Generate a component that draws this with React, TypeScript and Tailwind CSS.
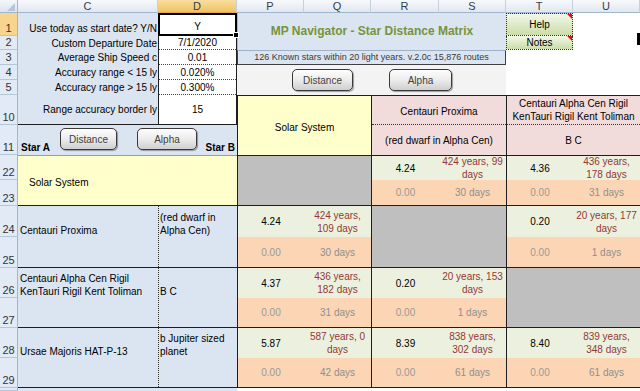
import React from 'react';

type Pair = { dist: string; time: string[]; time2: string } | null;

const STARS: { name: string[]; note: string[]; pairs: Pair[] }[] = [
  {
    name: ['Solar System'], note: [],
    pairs: [
      null,
      { dist: '4.24', time: ['424 years, 99', 'days'], time2: '30 days' },
      { dist: '4.36', time: ['436 years,', '178 days'], time2: '31 days' },
    ],
  },
  {
    name: ['Centauri Proxima'], note: ['(red dwarf in', 'Alpha Cen)'],
    pairs: [
      { dist: '4.24', time: ['424 years,', '109 days'], time2: '30 days' },
      null,
      { dist: '0.20', time: ['20 years, 177', 'days'], time2: '1 days' },
    ],
  },
  {
    name: ['Centauri Alpha Cen Rigil', 'KenTauri Rigil Kent Toliman'], note: ['B C'],
    pairs: [
      { dist: '4.37', time: ['436 years,', '182 days'], time2: '31 days' },
      { dist: '0.20', time: ['20 years, 153', 'days'], time2: '1 days' },
      null,
    ],
  },
  {
    name: ['Ursae Majoris HAT-P-13'], note: ['b Jupiter sized', 'planet'],
    pairs: [
      { dist: '5.87', time: ['587 years, 0', 'days'], time2: '42 days' },
      { dist: '8.39', time: ['838 years,', '302 days'], time2: '61 days' },
      { dist: '8.40', time: ['839 years,', '348 days'], time2: '61 days' },
    ],
  },
];

const TOP = ['row-start-9', 'row-start-11', 'row-start-13', 'row-start-15'];
const BOT = ['row-start-10', 'row-start-12', 'row-start-14', 'row-start-16'];
const SPAN = ['row-start-9 row-span-2', 'row-start-11 row-span-2', 'row-start-13 row-span-2', 'row-start-15 row-span-2'];
const UPPER_H = ['h-[25px]', 'h-[31px]', 'h-[30px]', 'h-[30px]'];
const COL_A = ['col-start-4', 'col-start-6', 'col-start-8'];
const COL_B = ['col-start-5', 'col-start-7', 'col-start-9'];

const ROW_HEADS = [
  { n: '1', cls: 'row-start-2 bg-[#f8d58d]' },
  { n: '2', cls: 'row-start-3' },
  { n: '3', cls: 'row-start-4' },
  { n: '4', cls: 'row-start-5' },
  { n: '5', cls: 'row-start-6' },
  { n: '10', cls: 'row-start-7' },
  { n: '11', cls: 'row-start-8' },
  { n: '22', cls: 'row-start-9' },
  { n: '23', cls: 'row-start-10' },
  { n: '24', cls: 'row-start-11' },
  { n: '25', cls: 'row-start-12' },
  { n: '26', cls: 'row-start-13' },
  { n: '27', cls: 'row-start-14' },
  { n: '28', cls: 'row-start-15' },
  { n: '29', cls: 'row-start-16' },
  { n: '', cls: 'row-start-17' },
];

const COL_HEADS = [
  { n: 'C', cls: 'col-start-2' },
  { n: 'D', cls: 'col-start-3 from-[#f9dea0] to-[#f1c260] border-b-[#e2a94a]' },
  { n: 'P', cls: 'col-start-4' },
  { n: 'Q', cls: 'col-start-5' },
  { n: 'R', cls: 'col-start-6' },
  { n: 'S', cls: 'col-start-7' },
  { n: 'T', cls: 'col-start-8' },
  { n: 'U', cls: 'col-start-9' },
];

const SETTINGS = [
  { label: 'Custom Departure Date', value: '7/1/2020', h: 'h-[14px]' },
  { label: 'Average Ship Speed c', value: '0.01', h: 'h-[15px]' },
  { label: 'Accuracy range < 15 ly', value: '0.020%', h: 'h-[15px]' },
  { label: 'Accuracy range > 15 ly', value: '0.300%', h: 'h-[15px]' },
];

function Btn({ label, w }: { label: string; w: string }) {
  return (
    <div className={`${w} h-[22px] shrink-0 rounded-[5px] border border-[#3a3a3a] bg-linear-to-b from-[#fdfdfd] via-[#ececec] to-[#cfcfcf] shadow-[1px_1px_1px_rgba(0,0,0,0.35)] flex items-center justify-center text-[10px] text-[#404040]`}>
      {label}
    </div>
  );
}

function Triangle() {
  return <div className="absolute top-0 right-0 w-0 h-0 border-l-[5px] border-l-transparent border-t-[5px] border-t-[#e01010]" />;
}

export default function App() {
  return (
    <div className="w-[640px] h-[391px] overflow-hidden bg-white font-['Liberation_Sans',Arial,sans-serif] text-[10px] leading-[13px] text-black">
      <div className="grid grid-cols-[18px_140px_79px_67px_67px_68px_67px_67px_67px] grid-rows-[13px_23px_14px_15px_15px_15px_30px_30px_25px_26px_31px_31px_30px_30px_30px_30px_3px]">

        {/* corner + column headers */}
        <div className="col-start-1 row-start-1 relative bg-linear-to-b from-[#f4f7fb] to-[#dde4ee] border-r border-b border-[#9eb6ce]">
          <svg className="absolute right-[2px] bottom-[1px]" width="8" height="8" viewBox="0 0 8 8">
            <polygon points="8,0 8,8 0,8" fill="#b6c5d8" />
          </svg>
        </div>
        {COL_HEADS.map(c => (
          <div key={c.n} className={`${c.cls} row-start-1 bg-linear-to-b from-[#f7f9fc] to-[#e1e7ef] border-r border-r-[#c6d1de] border-b border-b-[#9eb6ce] flex items-center justify-center text-[11px] leading-none text-[#333c4a]`}>
            {c.n}
          </div>
        ))}

        {/* row headers */}
        {ROW_HEADS.map((r, i) => (
          <div key={i} className={`${r.cls} col-start-1 bg-[#e2eaf5] border-b border-b-[#b4c6da] border-r border-r-[#9eb6ce] flex items-end justify-center pb-[1px] text-[11px] leading-none text-[#333]`}>
            {r.n}
          </div>
        ))}

        {/* settings labels */}
        <div className="col-start-2 row-start-2 bg-[#dbe5f1] flex items-end justify-end pr-[1px] pb-[1px]">Use today as start date? Y/N</div>
        {SETTINGS.map((s, i) => (
          <div key={s.label} className={`col-start-2 ${['row-start-3', 'row-start-4', 'row-start-5', 'row-start-6'][i]} bg-[#dbe5f1] flex items-center justify-end pr-[1px]`}>
            {s.label}
          </div>
        ))}
        <div className="col-start-2 row-start-7 bg-[#dbe5f1] border-b border-[#1e1e1e] flex items-center justify-end pr-[1px]">Range accuracy border ly</div>

        {/* settings values */}
        <div className="col-start-3 row-start-2 row-span-6 flex flex-col bg-white border-x border-b border-[#1e1e1e]">
          <div className="h-[23px] relative border-2 border-black -mx-[1px] flex items-end justify-center pb-[1px]">
            Y
            <div className="absolute -right-[4px] -bottom-[4px] w-[6px] h-[6px] bg-black border border-white" />
          </div>
          {SETTINGS.map(s => (
            <div key={s.value} className={`${s.h} border-b border-dotted border-[#444] flex items-center justify-center`}>{s.value}</div>
          ))}
          <div className="flex-1 flex items-center justify-center">15</div>
        </div>

        {/* Star A / Star B row with buttons */}
        <div className="col-start-2 col-span-2 row-start-8 bg-[#dbe5f1] flex">
          <div className="w-[42px] shrink-0 flex items-end pl-[3px] pb-[1px] font-bold">Star A</div>
          <div className="flex gap-[20px] pt-[3px]">
            <Btn label="Distance" w="w-[57px]" />
            <Btn label="Alpha" w="w-[60px]" />
          </div>
          <div className="flex-1 flex items-end justify-end pr-[2px] pb-[1px] font-bold">Star B</div>
        </div>

        {/* title block */}
        <div className="col-start-4 col-span-4 row-start-2 row-span-2 bg-[#dbe5f1] border-l border-[#a9b8c9] flex items-center justify-center text-[12px] font-bold text-[#77933c]">
          MP Navigator - Star Distance Matrix
        </div>
        <div className="col-start-4 col-span-4 row-start-4 bg-[#dbe5f1] border border-t-[#9fb1c6] border-[#404040] flex items-center justify-center text-[9px] text-[#3a3a3a]">
          126 Known stars within 20 light years. v.2.0c 15,876 routes
        </div>
        <div className="col-start-4 col-span-4 row-start-5 row-span-2 bg-[#f3f3f3] flex items-center pl-[55px] gap-[36px]">
          <Btn label="Distance" w="w-[61px]" />
          <Btn label="Alpha" w="w-[63px]" />
        </div>

        {/* Help / Notes */}
        <div className="col-start-8 row-start-2 relative bg-linear-to-b from-[#f3f8ea] to-[#cbdca8] border border-dotted border-[#333] flex items-center justify-center">
          Help
          <Triangle />
        </div>
        <div className="col-start-8 row-start-3 relative bg-linear-to-b from-[#f3f8ea] to-[#cbdca8] border border-dotted border-t-0 border-[#333] flex items-center justify-center">
          Notes
          <Triangle />
        </div>
        <div className="col-start-9 row-start-2 row-span-5 relative">
          <div className="absolute right-0 top-[20px] w-[3px] h-[12px] bg-black" />
        </div>

        {/* matrix column headers */}
        <div className="col-start-4 col-span-2 row-start-7 row-span-2 bg-[#ffffcc] border-l border-t border-[#1e1e1e] flex items-center justify-center pt-[3px]">
          Solar System
        </div>
        <div className="col-start-6 col-span-2 row-start-7 row-span-2 bg-[#f2dcdb] border-l border-t border-[#1e1e1e] flex flex-col">
          <div className="h-[29px] border-b border-dotted border-[#333] flex items-center justify-center pt-[2px]">Centauri Proxima</div>
          <div className="flex-1 flex items-center justify-center">(red dwarf in Alpha Cen)</div>
        </div>
        <div className="col-start-8 col-span-2 row-start-7 row-span-2 bg-[#f2dcdb] border-l border-t border-[#1e1e1e] flex flex-col">
          <div className="h-[29px] border-b border-dotted border-[#333] flex flex-col items-center justify-center text-center">
            <span>Centauri Alpha Cen Rigil</span>
            <span>KenTauri Rigil Kent Toliman</span>
          </div>
          <div className="flex-1 flex items-center justify-center">B C</div>
        </div>

        {/* matrix rows */}
        {STARS.map((s, i) => (
          <React.Fragment key={i}>
            {i === 0 ? (
              <div className="col-start-2 col-span-2 row-start-9 row-span-2 bg-[#ffffcc] border-t border-t-[#9a9a9a] border-b border-b-[#1e1e1e] flex items-center pl-[11px] pt-[3px]">
                {s.name[0]}
              </div>
            ) : (
              <>
                <div className={`col-start-2 ${SPAN[i]} bg-[#dbe5f1] border-b border-[#1e1e1e]`}>
                  <div className={`${UPPER_H[i]} flex flex-col justify-end pl-[2px]`}>
                    {s.name.map(t => <span key={t}>{t}</span>)}
                  </div>
                </div>
                <div className={`col-start-3 ${SPAN[i]} bg-[#dbe5f1] border-b border-[#1e1e1e]`}>
                  <div className="h-full border-l border-dotted border-[#333]">
                    <div className={`${UPPER_H[i]} flex flex-col justify-end pl-[1px]`}>
                      {s.note.map(t => <span key={t}>{t}</span>)}
                    </div>
                  </div>
                </div>
              </>
            )}
            {s.pairs.map((p, j) =>
              p === null ? (
                <div key={j} className={`${COL_A[j]} col-span-2 ${SPAN[i]} bg-[#bfbfbf] border-l border-b border-[#1e1e1e] ${i === 0 ? 'border-t' : ''}`} />
              ) : (
                <React.Fragment key={j}>
                  <div className={`${COL_A[j]} ${TOP[i]} bg-[#ebf1de] border-l border-[#1e1e1e] ${i === 0 ? 'border-t' : ''} flex items-center justify-center`}>
                    {p.dist}
                  </div>
                  <div className={`${COL_B[j]} ${TOP[i]} bg-[#ebf1de] border-[#1e1e1e] ${i === 0 ? 'border-t' : ''} flex flex-col items-center justify-center text-center text-[#953735]`}>
                    {p.time.map(t => <span key={t}>{t}</span>)}
                  </div>
                  <div className={`${COL_A[j]} ${BOT[i]} bg-[#fcd5b4] border-l border-b border-[#1e1e1e] flex items-center justify-center text-[#9a9a9a]`}>
                    0.00
                  </div>
                  <div className={`${COL_B[j]} ${BOT[i]} bg-[#fcd5b4] border-b border-[#1e1e1e] flex items-center justify-center text-[#8f8f8f]`}>
                    {p.time2}
                  </div>
                </React.Fragment>
              )
            )}
          </React.Fragment>
        ))}

        <div className="col-start-2 col-span-2 row-start-17 bg-[#dbe5f1]" />
      </div>
    </div>
  );
}
